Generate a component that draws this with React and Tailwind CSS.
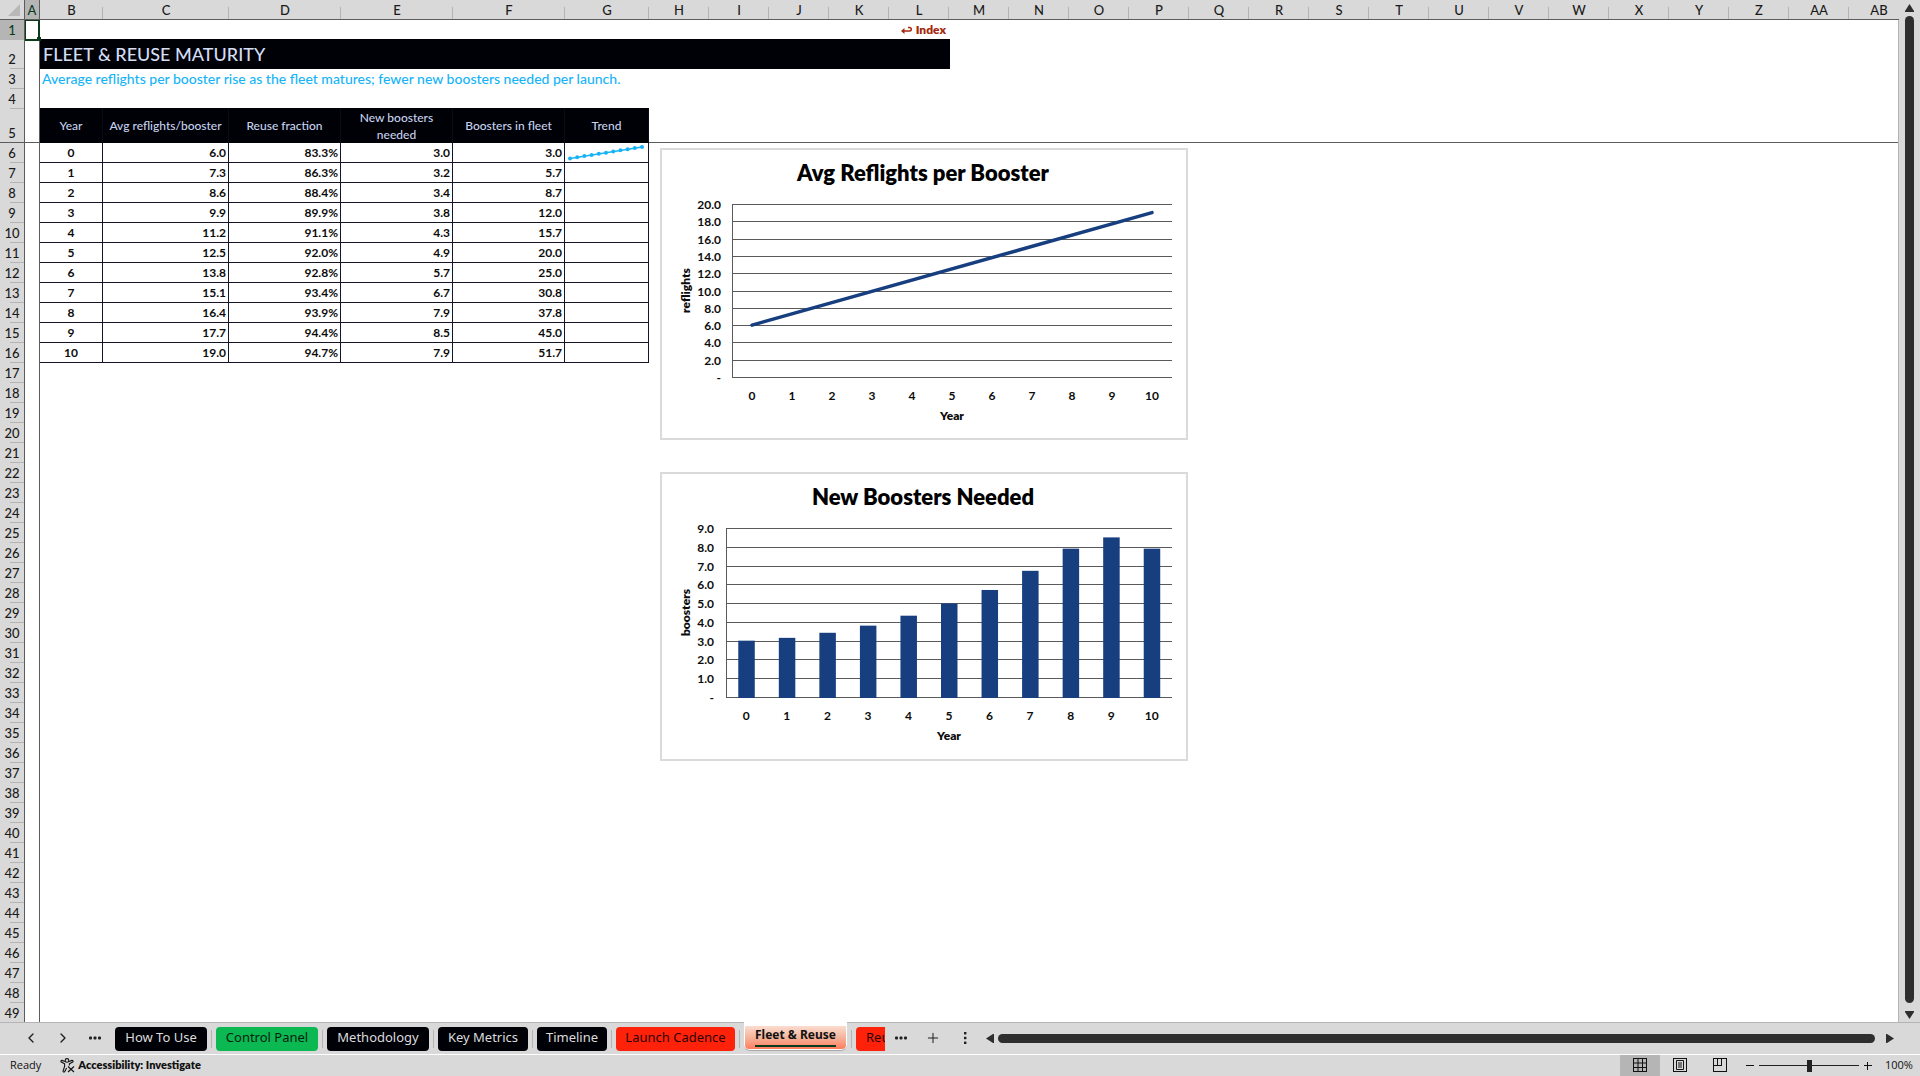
import { Plus, ChevronLeft, ChevronRight } from 'lucide-react';

const narrowColumns = 'H I J K L M N O P Q R S T U V W X Y Z AA AB'.split(' ');
const rowNumbers = Array.from({ length: 44 }, (_, i) => i + 6);

const fleet = [
    { year: 0, reflights: '6.0', reuse: '83.3%', needed: '3.0', total: '3.0' },
    { year: 1, reflights: '7.3', reuse: '86.3%', needed: '3.2', total: '5.7' },
    { year: 2, reflights: '8.6', reuse: '88.4%', needed: '3.4', total: '8.7' },
    { year: 3, reflights: '9.9', reuse: '89.9%', needed: '3.8', total: '12.0' },
    { year: 4, reflights: '11.2', reuse: '91.1%', needed: '4.3', total: '15.7' },
    { year: 5, reflights: '12.5', reuse: '92.0%', needed: '4.9', total: '20.0' },
    { year: 6, reflights: '13.8', reuse: '92.8%', needed: '5.7', total: '25.0' },
    { year: 7, reflights: '15.1', reuse: '93.4%', needed: '6.7', total: '30.8' },
    { year: 8, reflights: '16.4', reuse: '93.9%', needed: '7.9', total: '37.8' },
    { year: 9, reflights: '17.7', reuse: '94.4%', needed: '8.5', total: '45.0' },
    { year: 10, reflights: '19.0', reuse: '94.7%', needed: '7.9', total: '51.7' },
];

const boosters = [3, 3.15, 3.42, 3.8, 4.33, 4.98, 5.7, 6.72, 7.9, 8.5, 7.9];

const ColumnHead = ({ children, className }) => (
    <div className={`flex h-5 shrink-0 items-center justify-center border-b border-[#5c5c5c] ${className}`}>
        {children}
    </div>
);

const LetterHead = ({ label, width }) => (
    <ColumnHead className={width}>
        <span className="flex-1 pl-px text-center">{label}</span>
        {/* short tick between two column letters */}
        <span className="h-3 w-px shrink-0 self-end bg-[#b4b4b4]" />
    </ColumnHead>
);

const ColumnHeads = () => (
    <div className="flex h-5 overflow-hidden text-[13px] leading-4 font-medium text-[#1a1a1a]">
        <ColumnHead className="w-[24px] justify-end pr-1">
            <svg className="size-3" viewBox="0 0 12 12">
                <path d="M12 0V12H0Z" fill="#b8b8b8" />
            </svg>
        </ColumnHead>
        <ColumnHead className="w-4 border-x bg-[#b5b5b5] text-[#0b3a1c]">A</ColumnHead>
        <LetterHead label="B" width="w-[63px]" />
        <LetterHead label="C" width="w-[126px]" />
        <LetterHead label="D" width="w-[112px]" />
        <LetterHead label="E" width="w-[112px]" />
        <LetterHead label="F" width="w-[112px]" />
        <LetterHead label="G" width="w-[84px]" />
        {narrowColumns.map((label) => (
            <LetterHead key={label} label={label} width="w-[60px]" />
        ))}
    </div>
);

const RowHead = ({ label, height, className }) => (
    <div className={`relative flex shrink-0 items-end justify-center ${height} ${className || ''}`}>
        {label}
        <span className="absolute right-0 bottom-0 h-px w-[14px] bg-[#b4b4b4]" />
    </div>
);

const RowHeads = () => (
    <div className="flex w-[25px] shrink-0 flex-col overflow-hidden border-r border-[#5c5c5c] text-[13px] leading-5 font-medium text-[#1a1a1a]">
        <RowHead label="1" height="h-5" className="bg-[#b5b5b5] text-[#0b3a1c]" />
        <RowHead label="2" height="h-[29px]" />
        <RowHead label="3" height="h-5" />
        <RowHead label="4" height="h-5" />
        <div className="flex h-[34px] shrink-0 items-end justify-center border-b border-[#5c5c5c] leading-[18px]">5</div>
        {rowNumbers.map((n) => (
            <RowHead key={n} label={n} height="h-5" />
        ))}
    </div>
);

const Sparkline = () => (
    <svg className="h-[19px] w-[83px]" viewBox="0 0 83 19">
        <path d="M5 15.4L77 3.9" stroke="#16b4f7" strokeWidth="1.5" />
        {fleet.map(({ year }) => (
            <circle key={year} cx={5 + year * 7.2} cy={15.4 - year * 1.15} r="2" fill="#16b4f7" />
        ))}
    </svg>
);

const headCell = 'border-r border-[#0a0a18] p-0 text-center font-medium';
const dataCell = 'border-r border-b border-[#15152a] p-0 pr-[2px] text-right';

const FleetTable = () => (
    <table className="w-[609px] shrink-0 table-fixed border-separate border-spacing-0 self-start text-[12px] leading-[17px] font-bold text-[#0c0c0c]">
        <colgroup>
            <col className="w-[63px]" />
            <col className="w-[126px]" />
            <col className="w-[112px]" />
            <col className="w-[112px]" />
            <col className="w-[112px]" />
            <col className="w-[84px]" />
        </colgroup>
        <thead className="bg-[#000007] text-[#c6d3ee]">
            <tr className="h-[35px]">
                <th className={headCell}>Year</th>
                <th className={headCell}>Avg reflights/booster</th>
                <th className={headCell}>Reuse fraction</th>
                <th className={headCell}>New boosters needed</th>
                <th className={headCell}>Boosters in fleet</th>
                <th className={headCell}>Trend</th>
            </tr>
        </thead>
        <tbody>
            {fleet.map((row) => (
                <tr key={row.year} className="h-5">
                    <td className="border-r border-b border-[#15152a] p-0 text-center">{row.year}</td>
                    <td className={dataCell}>{row.reflights}</td>
                    <td className={dataCell}>{row.reuse}</td>
                    <td className={dataCell}>{row.needed}</td>
                    <td className={dataCell}>{row.total}</td>
                    <td className="border-r border-b border-[#15152a] p-0">{row.year === 0 && <Sparkline />}</td>
                </tr>
            ))}
        </tbody>
    </table>
);

const Chart = ({ title, unit, height, left, labelX, top, bottom, max, step, children }) => {
    const y = (v) => bottom - ((bottom - top) * v) / max;
    const band = (512 - left) / 11;
    const ticks = Array.from({ length: max / step + 1 }, (_, i) => i * step);
    return (
        <figure className="w-[528px] border-2 border-[#dadada] bg-white">
            <svg
                className="block w-full"
                viewBox={`2 2 524 ${height - 4}`}
                fontFamily="Lato, 'Open Sans', sans-serif"
                fontSize="12"
                fontWeight="700"
                fill="#0c0c0c"
                role="img"
                aria-label={title}
            >
                <text x="263" y="33" textAnchor="middle" fontSize="22" fontWeight="800" fill="#000">
                    {title}
                </text>
                {ticks.map((v) => (
                    <g key={v}>
                        <path d={`M${left} ${Math.round(y(v)) + 0.5}H512`} stroke="#5a5a5a" />
                        <text x={labelX} y={Math.round(y(v)) + 5} textAnchor="end">
                            {v === 0 ? '-' : v.toFixed(1)}
                        </text>
                    </g>
                ))}
                <path d={`M${left + 0.5} ${top}V${bottom}`} stroke="#5a5a5a" />
                {children(y, band)}
                {fleet.map(({ year }) => (
                    <text key={year} x={left + band * (year + 0.5)} y={bottom + 23} textAnchor="middle">
                        {year}
                    </text>
                ))}
                <text x={(left + 512) / 2} y={bottom + 43} textAnchor="middle" fontWeight="800">
                    Year
                </text>
                <text
                    transform={`translate(30 ${(top + bottom) / 2}) rotate(-90)`}
                    textAnchor="middle"
                    fontWeight="800"
                >
                    {unit}
                </text>
            </svg>
        </figure>
    );
};

const Charts = () => (
    <div className="mt-[5px] ml-[11px] flex flex-col gap-8">
        <Chart title="Avg Reflights per Booster" unit="reflights" height={292} left={72} labelX={61} top={56} bottom={229} max={20} step={2}>
            {(y, band) => (
                <path
                    d={`M${72 + band / 2} ${y(6)}L${512 - band / 2} ${y(19)}`}
                    stroke="#173f80"
                    strokeWidth="3.5"
                    strokeLinecap="round"
                />
            )}
        </Chart>
        <Chart title="New Boosters Needed" unit="boosters" height={289} left={66} labelX={54} top={56} bottom={225} max={9} step={1}>
            {(y, band) =>
                boosters.map((v, i) => (
                    <rect key={i} x={66 + band * (i + 0.5) - 8} y={y(v)} width="16.5" height={226 - y(v)} fill="#173f80" />
                ))
            }
        </Chart>
    </div>
);

const Sheet = () => (
    <main className="flex min-w-0 flex-1 overflow-hidden border-r border-[#b4b4b4] bg-white">
        <div className="relative w-[15px] shrink-0 border-r border-[#5c5c5c]">
            <div className="h-[123px] border-b border-[#5c5c5c]" />
            {/* active cell A1 */}
            <div className="absolute -top-px -left-px h-[22px] w-4 border-2 border-[#0b3a1c]" />
            <div className="absolute top-[17px] left-3 size-1 bg-[#0b3a1c]" />
        </div>
        <div className="flex min-w-0 flex-1 flex-col">
            <div className="flex h-[19px] w-[909px] items-center justify-end pr-[3px] text-[12px] font-extrabold text-[#a3280c]">
                <a href="#index" className="flex items-center gap-1">
                    <svg className="h-2 w-3" viewBox="0 0 12 8" fill="none" stroke="currentColor" strokeWidth="1.5">
                        <path d="M8 1.5H9.5A1.6 1.6 0 0 1 9.5 5H2" />
                        <path d="M4.5 2L1 5L4.5 8Z" fill="currentColor" stroke="none" />
                    </svg>
                    Index
                </a>
            </div>
            <h1 className="flex h-[30px] w-[910px] items-center bg-[#000007] pl-[3px] text-[18px] font-medium text-[#d3ddf3]">
                FLEET &amp; REUSE MATURITY
            </h1>
            <p className="h-[39px] pl-[2px] text-[14px] leading-5 font-medium text-[#16b4f7]">
                Average reflights per booster rise as the fleet matures; fewer new boosters needed per launch.
            </p>
            <div className="flex">
                <FleetTable />
                <div className="min-w-0 flex-1">
                    <div className="h-[35px] border-b border-[#5c5c5c]" />
                    <Charts />
                </div>
            </div>
        </div>
    </main>
);

const VerticalScroll = () => (
    <div className="flex w-[21px] shrink-0 flex-col items-center gap-1 pt-1 pb-[3px]">
        <button type="button" aria-label="Scroll up">
            <svg className="block h-2 w-[9px]" viewBox="0 0 9 8">
                <path d="M4.5 0L9 7V8H0V7Z" fill="#2e2e2e" />
            </svg>
        </button>
        <div className="mb-1 w-[9px] flex-1 rounded-full bg-[#2e2e2e]" />
        <button type="button" aria-label="Scroll down">
            <svg className="block h-2 w-[9px]" viewBox="0 0 9 8">
                <path d="M4.5 8L9 1V0H0V1Z" fill="#2e2e2e" />
            </svg>
        </button>
    </div>
);

const sheetTabs = [
    { name: 'How To Use', style: 'w-[92px] bg-[#000007] text-[#dcdcdc]' },
    { name: 'Control Panel', style: 'w-[102px] bg-[#0bb852] text-[#06200f]' },
    { name: 'Methodology', style: 'w-[102px] bg-[#000007] text-[#dcdcdc]' },
    { name: 'Key Metrics', style: 'w-[90px] bg-[#000007] text-[#dcdcdc]' },
    { name: 'Timeline', style: 'w-[70px] bg-[#000007] text-[#dcdcdc]' },
    { name: 'Launch Cadence', style: 'w-[119px] bg-[#ff220b] text-[#2a0500]' },
];

const Divider = () => <span className="mx-1 h-[18px] w-px shrink-0 bg-[#b4b4b4]" />;

const Dots = () => (
    <svg className="h-1 w-3" viewBox="0 0 12 4" fill="#1f1f1f">
        <rect x="0" y="0.5" width="3" height="3" rx="1" />
        <rect x="4.5" y="0.5" width="3" height="3" rx="1" />
        <rect x="9" y="0.5" width="3" height="3" rx="1" />
    </svg>
);

const iconButton = 'flex w-8 shrink-0 items-center justify-center pb-px';

const SheetTabs = () => (
    <nav className="flex h-8 shrink-0 items-stretch border-t border-[#b4b4b4] font-['Noto_Sans','Open_Sans',sans-serif] text-[13px] text-[#1f1f1f]">
        <div className="flex shrink-0 pr-1 pl-[15px]">
            <button type="button" className={iconButton} aria-label="Previous sheet">
                <ChevronLeft className="size-4" />
            </button>
            <button type="button" className={iconButton} aria-label="Next sheet">
                <ChevronRight className="size-4" />
            </button>
            <button type="button" className={iconButton} aria-label="All sheets">
                <Dots />
            </button>
        </div>
        <div className="flex shrink-0 items-center">
            {sheetTabs.map(({ name, style }) => (
                <div key={name} className="flex items-center">
                    <button type="button" className={`h-6 rounded-sm pb-px whitespace-nowrap ${style}`}>
                        {name}
                    </button>
                    <Divider />
                </div>
            ))}
            <div className="-mt-px flex h-[29px] w-[103px] self-start rounded-b-md border-b border-[#a8a8a8] bg-white p-px pt-1">
                <button
                    type="button"
                    className="flex flex-1 items-start justify-center rounded-b-sm bg-linear-to-b from-[#fbdccf] via-[#f3b49c] to-[#ff7b5c] font-bold whitespace-nowrap text-[#111]"
                >
                    <span className="border-b-2 border-[#0b3a1c] pb-px text-[12px] leading-[18px]">Fleet &amp; Reuse</span>
                </button>
            </div>
            <Divider />
            <button
                type="button"
                className="h-6 w-[29px] overflow-hidden rounded-l-sm bg-[#ff220b] pb-px pl-[10px] text-left text-[#2a0500]"
            >
                Reu
            </button>
        </div>
        <button type="button" className={iconButton} aria-label="More sheets">
            <Dots />
        </button>
        <button type="button" className={iconButton} aria-label="New sheet">
            <Plus className="size-4" strokeWidth={1.5} />
        </button>
        <button type="button" className={iconButton} aria-label="Tab options">
            <svg className="h-3 w-1" viewBox="0 0 4 12" fill="#1f1f1f">
                <rect x="1" y="0" width="2.4" height="2.4" />
                <rect x="1" y="4.8" width="2.4" height="2.4" />
                <rect x="1" y="9.6" width="2.4" height="2.4" />
            </svg>
        </button>
        <div className="flex flex-1 items-center gap-1 pr-[26px] pb-px pl-[5px]">
            <button type="button" aria-label="Scroll left">
                <svg className="block h-[9px] w-2" viewBox="0 0 8 9">
                    <path d="M0 4.5L7 0H8V9H7Z" fill="#2e2e2e" />
                </svg>
            </button>
            <div className="mr-[7px] h-[9px] flex-1 rounded-full bg-[#2e2e2e]" />
            <button type="button" aria-label="Scroll right">
                <svg className="block h-[9px] w-2" viewBox="0 0 8 9">
                    <path d="M8 4.5L1 0H0V9H1Z" fill="#2e2e2e" />
                </svg>
            </button>
        </div>
    </nav>
);

const ViewIcon = ({ children }) => (
    <svg className="size-[14px]" viewBox="0 0 14 14" fill="none" stroke="#111" strokeWidth="1">
        <rect x="0.5" y="0.5" width="13" height="13" />
        {children}
    </svg>
);

const StatusBar = () => (
    <footer className="flex h-[22px] shrink-0 items-stretch border-t border-white font-['Open_Sans','Noto_Sans',sans-serif] text-[11px] text-[#111]">
        <div className="flex flex-1 items-center gap-[19px] pl-[10px]">
            <span className="font-medium">Ready</span>
            <button type="button" className="flex items-center gap-[3px] font-['Lato','Open_Sans',sans-serif] font-extrabold">
                <svg className="size-[15px]" viewBox="0 0 15 15" fill="none" stroke="#111" strokeWidth="1.1">
                    <circle cx="7" cy="2.4" r="1.8" />
                    <path d="M5 3.5L2 2.4Q0.6 2.4 1 3.8L4.6 5.8V8.5L3 13Q3.2 14.6 4.6 13.8L6.6 10" />
                    <path d="M9 3.5L12 2.4Q13.4 2.4 13 3.8L9.4 5.8V7.5" />
                    <path d="M8 8.5L14 14M14 8.5L8 14" />
                </svg>
                Accessibility: Investigate
            </button>
        </div>
        <div className="flex shrink-0">
            <button type="button" className="flex w-10 items-center justify-center bg-[#b5b5b5] pb-px" aria-label="Normal view">
                <ViewIcon>
                    <path d="M0 5H14M0 9.5H14M5 0V14M9.5 0V14" />
                </ViewIcon>
            </button>
            <button type="button" className="flex w-10 items-center justify-center pb-px" aria-label="Page layout view">
                <ViewIcon>
                    <path d="M3.5 2.5H10.5V11.5H3.5ZM5 5H9M5 7H9M5 9H9" />
                </ViewIcon>
            </button>
            <button type="button" className="flex w-10 items-center justify-center pb-px" aria-label="Page break preview">
                <ViewIcon>
                    <path d="M4.5 0V7.5M8.5 0V7.5M0 7.5H9" />
                </ViewIcon>
            </button>
        </div>
        <div className="flex w-[180px] shrink-0 items-center pl-[6px]">
            <button type="button" aria-label="Zoom out">
                <svg className="size-2" viewBox="0 0 8 8" stroke="#111">
                    <path d="M0 3.5H8" />
                </svg>
            </button>
            <input
                type="range"
                aria-label="Zoom"
                min="0"
                max="100"
                defaultValue="50"
                className="mx-[5px] h-3 w-[100px] appearance-none bg-[linear-gradient(#222,#222)] bg-[length:100%_1px] bg-center bg-no-repeat [&::-webkit-slider-thumb]:h-3 [&::-webkit-slider-thumb]:w-[5px] [&::-webkit-slider-thumb]:appearance-none [&::-webkit-slider-thumb]:bg-[#222]"
            />
            <button type="button" aria-label="Zoom in">
                <svg className="size-2" viewBox="0 0 8 8" stroke="#111">
                    <path d="M0 3.5H8M3.5 0V8" />
                </svg>
            </button>
            <span className="ml-[13px]">100%</span>
        </div>
    </footer>
);

const App = () => (
    <div className="flex h-screen flex-col overflow-hidden bg-[#d9d9d9] font-['Lato','Open_Sans',sans-serif]">
        <div className="flex min-h-0 flex-1">
            <div className="flex min-w-0 flex-1 flex-col">
                <ColumnHeads />
                <div className="flex min-h-0 flex-1">
                    <RowHeads />
                    <Sheet />
                </div>
            </div>
            <VerticalScroll />
        </div>
        <SheetTabs />
        <StatusBar />
    </div>
);

export default App;
